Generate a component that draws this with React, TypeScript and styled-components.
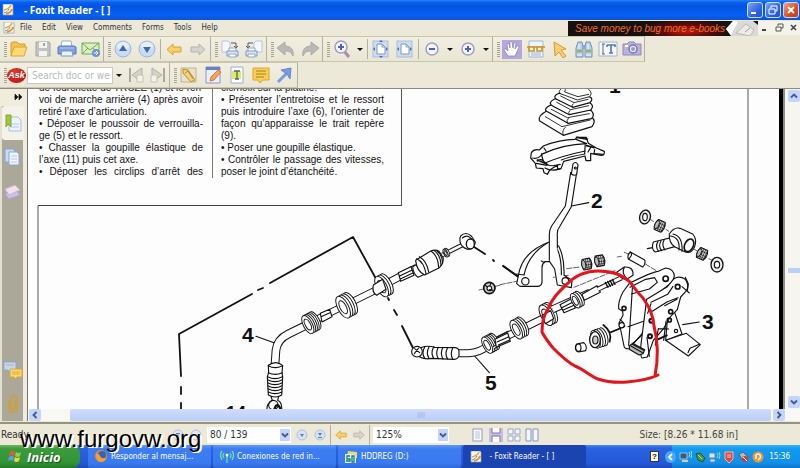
import React from "react";
import styled, { createGlobalStyle, css } from "styled-components";

const ui = '"DejaVu Sans Condensed", "DejaVu Sans", sans-serif';
const arial = '"Liberation Sans", Arial, sans-serif';

const Global = createGlobalStyle`
  *, *::before, *::after { box-sizing: border-box; }
  body { margin: 0; background: #ece9d8; font-family: ${ui}; font-size: 8px; color: #333; overflow: hidden; }
  button, input, select { font: inherit; color: inherit; margin: 0; padding: 0; border: 0; border-radius: 0; }
  button { background: none; }
  svg { display: block; }
`;

const Window = styled.div`
  position: relative;
  display: flex;
  flex-direction: column;
  height: 100vh;
`;

const TitleBar = styled.header`
  display: flex;
  align-items: center;
  height: 20px;
  flex: none;
  gap: 10px;
  padding: 0 1px 0 2px;
  background: linear-gradient(#2a86f8 0, #0a62ee 2px, #0453e2 6px, #0560f4 15px, #0b55dc 19px, #1c50b8 20px);
`;

const Title = styled.h1`
  flex: 1;
  margin: 0;
  font: bold 10px/18px "Open Sans", "Noto Sans", sans-serif;
  color: #fff;
  white-space: pre;
`;

const CaptionButtons = styled.div`
  display: flex;
  gap: 2px;
`;

const CaptionButton = styled.button<{ $close?: boolean }>`
  width: 16px;
  height: 16px;
  border: 1px solid #c9dcfb;
  border-radius: 3px;
  background: ${(p) => (p.$close ? "linear-gradient(135deg, #f0a088, #dd4a22 60%, #c43a16)" : "linear-gradient(135deg, #7ca5f5, #2f66e0 60%, #2252c4)")};
`;

const MenuBar = styled.nav`
  display: flex;
  align-items: center;
  height: 16px;
  flex: none;
  padding-left: 3px;
`;

const MenuItem = styled.button`
  height: 16px;
  margin-right: 10px;
  line-height: 14px;
`;

const MenuLogo = styled.span`
  width: 17px;
`;

const Banner = styled.a`
  display: flex;
  justify-content: space-between;
  height: 15px;
  width: 190px;
  margin-left: auto;
  padding-left: 7px;
  background: radial-gradient(ellipse 44px 12px at 118px 10px, #c81c0c, #5c0c08 55%, #16100e 100%) #16100e;
  font: italic 10px/15px ${arial};
  color: #ee6f2c;
  text-decoration: none;
  white-space: nowrap;
`;

const MdiButton = styled.button`
  width: 14px;
  height: 14px;
  background: #f4f3ea;
`;

const Toolbar = styled.div`
  display: flex;
  height: 26px;
  flex: none;
`;

const Group = styled.div`
  display: flex;
  align-items: center;
  height: 26px;
  padding-left: 4px;
  border-top: 1px solid #c9c5b2;
  border-right: 1px solid #b4b09e;
  border-bottom: 1px solid #c9c5b2;
  background: linear-gradient(#f1efe2, #e9e6d4);
`;

const Grip = styled.span`
  width: 3px;
  height: 15px;
  background: repeating-linear-gradient(#a8a594 0 1px, #ece9d8 1px 2px);
`;

const Tool = styled.button<{ $small?: boolean; $active?: boolean }>`
  display: flex;
  align-items: center;
  justify-content: center;
  width: ${(p) => (p.$small ? 22 : 24)}px;
  height: 20px;
  ${(p) => p.$active && css`
    background: linear-gradient(#b3a8dc, #b3a8dc) center / 20px 19px no-repeat;
  `}
`;

const Drop = styled.button`
  width: 12px;
  height: 20px;
  &::after {
    content: "";
    display: block;
    margin: 0 auto;
    width: 0;
    border: 3px solid transparent;
    border-top-color: #111;
    border-bottom: 0;
  }
`;

const Divider = styled.span`
  width: 1px;
  height: 20px;
  margin: 0 1px;
  background: #b4b09e;
`;

const AskLogo = styled.button`
  width: 19px;
  height: 15px;
  margin-right: 1px;
  border-radius: 50%;
  background: radial-gradient(circle at 40% 30%, #e23a2c, #b80c10);
  color: #fff;
  font: italic bold 9px/15px ${arial};
`;

const SearchBox = styled.input`
  width: 86px;
  height: 17px;
  padding-left: 4px;
  border: 1px solid #c4c9c8;
  background: #fff;
  font-size: 10px;
  &::placeholder { color: #b9b9b9; opacity: 1; }
`;

const Work = styled.main`
  display: flex;
  flex: 1;
  min-height: 0;
  border-top: 1px solid #8d8a7c;
`;

const Sidebar = styled.aside`
  display: flex;
  flex-direction: column;
  align-items: flex-start;
  width: 28px;
  flex: none;
  background: linear-gradient(90deg, #e4e1d0 0 2px, #aca899 2px 23px, #efecdf 23px 27px, #77756a 27px);
`;

const Expand = styled.button`
  width: 27px;
  height: 17px;
  padding-left: 12px;
  background: #f0eddc;
`;

const Tab = styled.button<{ $active?: boolean; $push?: boolean }>`
  display: flex;
  align-items: center;
  justify-content: center;
  width: 22px;
  height: 34px;
  margin-left: 2px;
  ${(p) => p.$active && css`background: #f5f3e9; border-radius: 3px 0 0 3px;`}
  ${(p) => p.$push && css`margin-top: auto;`}
`;

const Viewer = styled.section`
  display: flex;
  flex-direction: column;
  flex: 1;
  min-width: 0;
`;

const ViewRow = styled.div`
  display: flex;
  flex: 1;
  min-height: 0;
`;

const Page = styled.article`
  position: relative;
  flex: 1;
  overflow: hidden;
  padding-left: 10px;
  background: #fdfdfd;
  border-right: 4px solid #000;
`;

const TextBox = styled.div`
  display: flex;
  align-items: flex-end;
  width: 364px;
  height: 117px;
  padding-bottom: 27px;
  border-right: 1px solid #555;
  border-bottom: 1px solid #444;
  font: 10px/12px ${arial};
  color: #111;
`;

const Column = styled.div<{ $first?: boolean }>`
  padding: ${(p) => (p.$first ? "0 9px 0 1px" : "0 0 0 8px")};
  width: ${(p) => (p.$first ? 175 : 171)}px;
  ${(p) => p.$first && css`border-right: 1px solid #777;`}
`;

const Line = styled.div<{ $ragged?: boolean }>`
  height: 12px;
  white-space: nowrap;
  text-align-last: ${(p) => (p.$ragged ? "left" : "justify")};
`;

const Drawing = styled.svg`
  position: absolute;
  inset: 0;
  width: 100%;
  height: 100%;
`;

const VScroll = styled.div`
  display: flex;
  flex-direction: column;
  justify-content: space-between;
  align-items: center;
  width: 17px;
  flex: none;
  padding: 1px 1px 1px 3px;
  border-left: 2px solid #8c8c8c;
  background: #f6f5ef;
`;

const ScrollButton = styled.button`
  display: flex;
  align-items: center;
  justify-content: center;
  width: 12px;
  height: 12px;
  flex: none;
  border-radius: 2px;
  background: #c5d4fa;
`;

const VThumb = styled.span`
  width: 12px;
  height: 5px;
  margin-top: 42px;
  border-radius: 1px;
  background: #bccdf8;
`;

const HScroll = styled.div`
  display: flex;
  align-items: center;
  height: 12px;
  flex: none;
  padding: 0 15px 0 1px;
  gap: 2px;
  background: #f8f8f4;
`;

const HThumb = styled.span`
  display: flex;
  align-items: center;
  justify-content: center;
  flex: 1;
  height: 12px;
  margin-left: 27px;
  border-radius: 2px;
  background: linear-gradient(#d0dcfd, #bccdf8);
`;

const StatusBar = styled.footer`
  display: flex;
  align-items: center;
  height: 23px;
  flex: none;
  margin-top: 1px;
  padding-left: 1px;
  border-top: 2px solid #96937f;
  font-size: 10px;
  background: #ece9d8;
`;

const Ready = styled.span`
  width: 168px;
`;

const Nav = styled.button<{ $w?: number }>`
  display: flex;
  align-items: center;
  justify-content: center;
  width: ${(p) => p.$w ?? 18}px;
  height: 18px;
`;

const Combo = styled.label<{ $wide?: boolean }>`
  position: relative;
  width: ${(p) => (p.$wide ? 84 : 76)}px;
  height: 16px;
  margin: 0 2px;
  background: #fff;
`;

const Select = styled.select`
  width: 100%;
  height: 16px;
  padding-left: 3px;
  appearance: none;
  background: none;
`;

const ComboArrow = styled.span`
  position: absolute;
  right: 1px;
  top: 2px;
  display: flex;
  align-items: center;
  justify-content: center;
  width: 10px;
  height: 12px;
  background: #c5d4fa;
  pointer-events: none;
`;

const Layouts = styled.div`
  display: flex;
  margin-left: 18px;
`;

const SizeText = styled.span`
  margin-left: auto;
  margin-right: 62px;
  color: #444;
`;

const Taskbar = styled.div`
  display: flex;
  align-items: stretch;
  gap: 2px;
  height: 23px;
  flex: none;
  background: linear-gradient(#4a8af4 0, #2a62e0 3px, #2459d8 18px, #1c48b8);
`;

const Start = styled.button`
  display: flex;
  align-items: center;
  gap: 5px;
  width: 80px;
  margin-right: 6px;
  padding-left: 8px;
  border-radius: 0 8px 8px 0;
  background: linear-gradient(#6cb865 0, #3a9a3c 4px, #329636 17px, #237a28);
  font: italic bold 13px/20px "Open Sans", "Noto Sans", sans-serif;
  color: #fff;
  text-shadow: 1px 1px 1px #1b4d1b;
`;

const Task = styled.button<{ $active?: boolean }>`
  display: flex;
  align-items: center;
  gap: 3px;
  width: 123px;
  padding-left: 7px;
  border-radius: 2px;
  background: ${(p) => (p.$active ? "#1c44b0" : "linear-gradient(#5f9bfa 0, #3c7df2 4px, #397af0 18px, #2f68d8)")};
  color: #fff;
  white-space: pre;
`;

const Help = styled.span`
  width: 9px;
  height: 11px;
  margin: 6px 11px 0 auto;
  background: #fffbe0;
  border: 1px solid #333;
  color: #111;
  font: bold 8px/9px ${arial};
  text-align: center;
`;

const Tray = styled.div`
  display: flex;
  align-items: center;
  gap: 2px;
  width: 128px;
  padding-right: 10px;
  background: linear-gradient(#38b0f8 0, #129af0 4px, #1290ea 18px, #0c72c8);
  color: #fff;
`;

const TrayChevron = styled.button`
  display: flex;
  align-items: center;
  justify-content: center;
  width: 11px;
  height: 12px;
  flex: none;
  margin-left: -7px;
  border-radius: 50%;
  background: #48a8f8;
`;

const Clock = styled.time`
  margin-left: auto;
`;

const Watermark = styled.div`
  position: absolute;
  left: 20px;
  bottom: 15px;
  font: 24px/28px ${arial};
  color: #000;
  text-shadow: 1px 1px 0 #fff, 2px 1px 0 #fff;
  pointer-events: none;
`;

const Glyph = ({ w = 20, h = 18, children }: { w?: number; h?: number; children: React.ReactNode }) => (
  <svg width={w} height={h} viewBox={`0 0 ${w} ${h}`} fill="none" aria-hidden="true">{children}</svg>
);

const Foxit = ({ size = 12 }: { size?: number }) => (
  <svg width={size} height={size} viewBox="0 0 12 12" aria-hidden="true">
    <path d="M1 0h9l1 1v10H1z" fill="#fdf9ee" stroke="#7d9cc8" strokeWidth=".7" />
    <path d="M2 6C6 5 8 4 9 1" fill="none" stroke="#e9ab35" strokeWidth="1.6" />
    <path d="M4 10C8 9 9 8 10 5" fill="none" stroke="#f08a24" strokeWidth="2" />
    <path d="M2 9C5 8 6 7 7 5" fill="none" stroke="#5f8ac4" strokeWidth="1" />
  </svg>
);

const Chevron = ({ dir }: { dir: "up" | "down" | "left" | "right" }) => {
  const d = { up: "M1 5.5l3-3 3 3", down: "M1 2.5l3 3 3-3", left: "M5.5 1l-3 3 3 3", right: "M2.5 1l3 3-3 3" }[dir];
  return <svg width="8" height="8" viewBox="0 0 8 8"><path d={d} fill="none" stroke="#43598c" strokeWidth="1.8" /></svg>;
};

const BackArrow = ({ gray, flip, small }: { gray?: boolean; flip?: boolean; small?: boolean }) => (
  <svg width={small ? 12 : 16} height={small ? 10 : 13} viewBox="0 0 16 13">
    <path transform={flip ? "translate(16 0) scale(-1 1)" : undefined} d="M1 6.5L7 1v3h8v5H7v3z" fill={gray ? "#d5d4cd" : "#f8cf68"} stroke={gray ? "#b4b3ac" : "#dca034"} strokeWidth="1" />
  </svg>
);

const Disc = ({ mark }: { mark: "up" | "down" }) => (
  <Glyph>
    <circle cx="10" cy="9" r="8" fill="#c9dcf6" stroke="#9db6de" />
    <ellipse cx="10" cy="6" rx="6" ry="4" fill="#e4effc" />
    <path d={mark === "up" ? "M6 11l4-6 4 6z" : "M6 7l4 6 4-6z"} fill="#4267b0" />
  </Glyph>
);

const PrintPages = ({ flip }: { flip?: boolean }) => (
  <Glyph>
    <g transform={flip ? "translate(20 0) scale(-1 1)" : undefined}>
      <path d="M2 1h6l2 2v9H2z" fill="#f4f8fe" stroke="#b7c4da" />
      <path d="M11 3h5v5M14 6l2 2 2-2" stroke="#555" />
      <path d="M9 8h7v4H9z" fill="#fff" stroke="#8ea3ca" />
      <path d="M7 11h11v5H7z" fill="#dbe6f8" stroke="#7d95c3" />
      <path d="M9 14h7v3H9z" fill="#fff" stroke="#8ea3ca" />
    </g>
  </Glyph>
);

const Undo = ({ flip }: { flip?: boolean }) => (
  <Glyph>
    <path transform={flip ? "translate(20 0) scale(-1 1)" : undefined} d="M1 8l8-6v4c6 0 9 4 8 10-2-4-4-5-8-5v4z" fill="#b9b9b6" stroke="#a9a9a6" />
  </Glyph>
);

const Fit = ({ wide }: { wide?: boolean }) => (
  <Glyph>
    <rect x="2" y="1" width="15" height="16" fill="#cfdcf0" stroke="#a9bddc" />
    <path d="M6 4h5l3 3v7H6z" fill="#fff" stroke="#7e97c4" />
    <path d="M11 4v3h3" stroke="#7e97c4" />
    <path d={wide ? "M2 9l2-2v4zM17 9l-2-2v4z" : "M2 9l2-2v4zM17 9l-2-2v4zM10 0L8 2h4zM10 18l-2-2h4z"} fill="#466eb4" />
  </Glyph>
);

const Lens = ({ plus, handle }: { plus?: boolean; handle?: boolean }) => (
  <Glyph>
    {handle && <path d="M12 11l5 6" stroke="#a48cb6" strokeWidth="3" />}
    <circle cx={handle ? 9 : 10} cy={handle ? 7 : 9} r="6" fill="#f4f6fe" stroke="#a59bc4" strokeWidth="1.5" />
    <path transform={handle ? "translate(-1 -2)" : undefined} d={plus ? "M7 9h6M10 6v6" : "M7 9h6"} stroke="#4a62b8" strokeWidth="2" />
  </Glyph>
);

const FindPage = ({ flip }: { flip?: boolean }) => (
  <Glyph w={16} h={16}>
    <g transform={flip ? "translate(16 0) scale(-1 1)" : undefined}>
      <path d="M2 1v13M14 1L4 8l10 7z" fill="#d6d4ca" stroke="#b1afa5" />
      <path d="M9 8h6v7H9z" fill="#f3f2ec" stroke="#c5c3b9" />
      <path d="M2 1v14" stroke="#aaa89e" strokeWidth="2" />
    </g>
  </Glyph>
);

const MiniDisc = ({ d, pale }: { d: string; pale?: boolean }) => (
  <Glyph w={12} h={12}>
    <circle cx="6" cy="6" r="5" fill={pale ? "#e2e8f0" : "#d6e2f6"} stroke="#aebfdd" />
    <path d={d} fill="#6079ad" />
  </Glyph>
);

const PageMode = ({ kind }: { kind: number }) => (
  <Glyph w={14} h={14}>
    {kind === 0 && <><rect x="2" y="1" width="9" height="12" fill="#f8fafe" stroke="#8e9cc4" /><path d="M4 4h5M4 6h5M4 8h5M4 10h5" stroke="#b8c2dc" /></>}
    {kind === 1 && <><rect x="0" y="0" width="14" height="14" fill="#c8bce2" /><path d="M3 0v5h8V0M3 14V8h8v6" fill="#fff" stroke="#7f76ac" /></>}
    {kind === 2 && <path d="M1 1h5v5H1zM8 1h5v5H8zM1 8h5v5H1zM8 8h5v5H8z" fill="#f3f6fd" stroke="#9aa8cc" />}
    {kind === 3 && <path d="M1 1h5v12H1zM8 1h5v12H8z" fill="#f3f6fd" stroke="#8494c0" />}
  </Glyph>
);

/* A pipe drawn as a dark stroke with a white core. */
const Tube = ({ d, w }: { d: string; w: number }) => (
  <>
    <path d={d} strokeWidth={w} strokeLinecap="butt" />
    <path d={d} strokeWidth={w - 6} stroke="#fff" strokeLinecap="butt" />
  </>
);

/* A grommet: stacked discs seen along the shaft direction. */
const Rings = ({ x, y, r, n = 3, step = 7, a = -28 }: { x: number; y: number; r: number; n?: number; step?: number; a?: number }) => (
  <g transform={`translate(${x} ${y}) rotate(${a})`} fill="#fff" strokeWidth="2.8">
    {Array.from({ length: n }, (_, i) => (
      <ellipse key={i} cx={(n - 1 - i) * step - ((n - 1) * step) / 2} cy={0} rx={r * 0.45} ry={r} />
    ))}
    <ellipse cx={(-(n - 1) * step) / 2} cy={0} rx={r * 0.26} ry={r * 0.6} />
  </g>
);

const Roller = ({ x, y, a = 25 }: { x: number; y: number; a?: number }) => (
  <g transform={`translate(${x} ${y}) rotate(${a})`}>
    <path d="M-12-16H10Q18 0 10 16H-12Q-20 0-12-16z" fill="#ddd" />
    <path d="M-8-14v28M-2-15v30M4-15v30M10-13v26M-14-7h28M-15 3h30M-13 10h25" strokeWidth="1.8" />
    <ellipse cx="-10" cy="0" rx="6" ry="13" fill="#bbb" strokeWidth="2.5" />
  </g>
);

const Diagram = () => (
  <Drawing viewBox="28 88 751 321" preserveAspectRatio="xMinYMin slice" fill="none" stroke="#111" strokeLinecap="round" strokeLinejoin="round">
    <path d="M38 205V409M748 88V409" stroke="#555" />
    <path d="M181 375l-2-42 73-40M258 289l5-2M270 282l83-46 22 40M388 297l1 2M394 309l3 5M402 325l13 26M181 386v7M181 402v6" strokeWidth="1.8" />
    <path d="M471 244l14 9M493 259l1 1M503 265l17 12" strokeWidth="1.8" />

    <g transform="translate(220 215) scale(.333333)" strokeWidth="3.4">
      <Tube d="M165 445L168 402Q172 370 205 354L262 326" w={26} />
      <Tube d="M280 315L480 216" w={22} />
      <path d="M301 292l28-12 7 22-30 16zM303 302l27-12" fill="#fff" />
      <Rings x={274} y={320} r={30} n={5} step={6} />
      <Rings x={380} y={268} r={36} n={4} step={8} />
      <Tube d="M490 208L590 155" w={24} />
      <path d="M535 170l38-18 9 26-40 18zM539 180l36-17M541 189l36-17" fill="#fff" />
      <Rings x={492} y={208} r={34} n={3} step={8} />
      <path d="M460 207l28-17 10 30-28 18q-15-8-10-31z" fill="#fff" />
      <path d="M578 152l28-16 18 34-30 14q-15-12-16-32z" fill="#fff" />
      <path d="M587 133l45-28q14-6 25 1l13 20q0 18-12 29l-44 22q-24-12-27-44z" fill="#fff" />
      <path d="M590 128q22 10 28 45M598 122q22 12 28 46M634 106q20 14 22 48M643 104q19 14 20 44M651 105q16 12 17 36" />
      <Tube d="M667 117L735 83" w={14} />
      <Rings x={679} y={110} r={13} n={2} step={5} />
      <path d="M722 60q15-15 32 0l12 18q-2 22-24 22-20-8-22-24-2-10 2-16z" fill="#fff" />
      <ellipse cx="751" cy="84" rx="12" ry="15" fill="#fff" strokeWidth="4" />
      <path d="M727 66q14-12 27 2" />
      <path d="M145 448q22-16 43 0l-2 22 2 12-3 55q-18 12-40 0l-3-55 4-12z" fill="#fff" />
      <path d="M145 449q20 12 42 0M145 470q20 10 42 0M143 482q22 12 44 0M143 491q22 12 44 0M143 500q22 12 44 0M143 509q22 12 43 0M144 518q22 12 42 0M145 528q20 10 41 0" />
      <path d="M153 541l4 12q-22 14-14 35M176 541l-3 12q14 6 12 30" />
      <circle cx="160" cy="567" r="14" /><path d="M163 580q8-24 18-2" strokeWidth="7" />
      <path d="M108 361l54 19M764 420l44 50" />
      <Tube d="M700 412H745Q780 410 810 385L870 354" w={24} />
      <path d="M602 395q20-8 43-1l62 1q11 3 10 14v10q-4 12-16 11l-64-3q-20 4-37-3z" fill="#fff" />
      <path d="M614 393q-10 18 0 34M627 393q-10 18 0 34M641 393q-10 18 0 34M655 394q-10 18 0 34M669 394q-10 18 0 35M683 395q-10 18 0 34M698 396q-8 18 0 33" />
      <circle cx="591" cy="407" r="16" fill="#fff" /><path d="M584 398l15 12M583 413l13-17" />
      <Rings x={812} y={382} r={27} n={5} step={6} />
      <path d="M777 222l62-14" strokeWidth="2" />
      <circle cx="808" cy="216" r="17" strokeWidth="5" fill="#ccc" /><circle cx="808" cy="217" r="7" fill="#fff" />
      <path d="M794 207l9 6M813 200l-3 9M818 223l-9-2" />
    </g>

    <g transform="translate(500 225) scale(.333333)" strokeWidth="3.4">
      <Tube d="M-20 366L0 352" w={10} />
      <Tube d="M-5 343L140 272" w={24} />
      <path d="M-15 340l38-19 8 25-42 18zM-9 348l34-15M-5 357l34-15" fill="#fff" />
      <Rings x={58} y={306} r={31} n={4} step={7} />
      <Rings x={145} y={264} r={34} n={3} step={8} />
      <path d="M126 268l26-14 9 24-25 15z" fill="#fff" />
      <Tube d="M158 250L270 200" w={24} />
      <path d="M180 236l34-18 12 28-34 14zM184 246l34-17M188 253l34-15" fill="#fff" />
      <Rings x={232} y={221} r={24} n={3} step={7} />
      <path d="M246 205l45-26 10 20-48 24z" fill="#fff" />
      <Tube d="M293 190L365 155" w={15} />
      <path d="M316 169l8 15M323 166l8 15M330 163l8 15M337 160l8 15" strokeWidth="4" />
      <path d="M350 139l23-16q28-2 26 25l-21 13q-17-4-28-22z" fill="#fff" />
      <path d="M373 124q-10 16 8 35" />

      <path d="M10 120l45 32" strokeWidth="5" />
      <path d="M0 176l50-10M205 148l-45 6M222 184L345 134M200 128l40-5M352 93l12-2M373 79l30 13M436 114l33 20" strokeWidth="2" strokeDasharray="16 5" />
      <Roller x={261} y={114} a={-10} /><Roller x={300} y={104} a={-10} />
      <path d="M391 78l43 24q4 13-6 21l-43-24q-4-12 6-21z" fill="#fff" /><path d="M391 78q9 8-5 21" />
      <path d="M55 150q10-72 93-102l28 12q18 35 16 88l24 15-2 22-42-8-8-48-15-22-15 0q-8 6-8 18v44q-2 12-14 12H60l-10-8z" fill="#fff" />
      <path d="M142 51Q85 85 72 147M172 70q13 28 12 76M73 147l-23-3M134 110l-10-5" />
      <circle cx="76" cy="166" r="11" /><circle cx="196" cy="165" r="10" />
      <path d="M212-160L196-60 155 0q-8 12-7 30v73L172 122V30q-2-18 8-30L214-58 230-160z" fill="#fff" stroke="none" />
      <path d="M212-160L196-60 155 0q-8 12-7 30v73M230-160L214-58 180 0q-10 12-8 30v36" />
      <path d="M214-156l5-30q8-10 15 2l-4 29q-7 6-16-1z" fill="#fff" /><circle cx="226" cy="-174" r="3" />
      <path d="M214-60l52-10M548 296l50-8" />

      <path d="M460 48l66-16 12 26-72 20q-14-8-6-30z" fill="#fff" />
      <path d="M474 47q-10 14 2 29M483 45q-9 15 2 29M492 43q-8 15 3 29M442 68l16-3" />
      <g transform="translate(0 24)">
        <path d="M508 0q14-22 32-17l38 17q14 16 6 38-8 22-28 16l-32-16q-18-12-16-38z" fill="#fff" />
        <path d="M511 6q30 4 26 42M519 0q30 6 27 52" /><ellipse cx="567" cy="34" rx="13" ry="20" transform="rotate(25 567 34)" fill="#fff" strokeWidth="5" />
      </g>
      <Roller x={607} y={84} /><Roller x={480} y={0} />
      <ellipse cx="651" cy="116" rx="18" ry="22" fill="#eee" strokeWidth="4" /><ellipse cx="651" cy="116" rx="8" ry="10" fill="#fff" />
      <ellipse cx="435" cy="-27" rx="16" ry="21" transform="rotate(15 435 -27)" fill="#eee" strokeWidth="4" /><ellipse cx="435" cy="-27" rx="7" ry="11" fill="#fff" />
      <path d="M450-20l10 6M498 10l8 6M582 70l8 4M627 98l12 7" strokeWidth="2" />

      <path d="M388 172Q455 138 475 136l22-10q24 2 26 24l-5 18-55 42-22 23-6 54v25l-47 56q-15 2-16-8l-11-54-4-15 12-23-1-12-12-8q-2-22 13-50z" fill="#fff" />
      <path d="M398 173l-12 185M390 184l47-24 27-5 8 14-24 20-54 15M384 302l55-19M434 320l-44 40M360 280l10 10" />
      <path d="M497 343l62-21 42 34-36 34z" fill="#fff" />
      <path d="M506 250l14-2 26 76-49 19 5-60z" fill="#fff" />
      <path d="M440 220l62-38 20-24q16-10 34 2 12 16 4 33l-18 20-10 38-20 20-22 38-30 34-18 50-16 3q-8-10 0-65z" fill="#fff" />
      <path d="M453 229l50-24 16-24M452 259l50-32 32-12M453 233l-10 29M494 239l37-19M441 334l7 57M475 308l-9 50M475 308l31 1M564 380l6-13 28-12M498 285l-7 58M556 154l9 20-3 20M546 182l22 19" />
      <path d="M388 360l10-8 36 19-5 12-12 4-29-17z" fill="#bbb" /><path d="M393 360l35 20M397 355l34 18" />
      <circle cx="497" cy="158" r="8" strokeWidth="5" /><circle cx="533" cy="182" r="7" strokeWidth="5" />
      <circle cx="372" cy="247" r="6" strokeWidth="5" /><circle cx="365" cy="298" r="8" fill="#fff" />
      <circle cx="454" cy="284" r="6" strokeWidth="6" /><circle cx="450" cy="331" r="6" strokeWidth="6" />
      <circle cx="512" cy="257" r="6" strokeWidth="5" /><circle cx="508" cy="282" r="6" strokeWidth="5" /><circle cx="528" cy="315" r="5" />
      <path d="M474 340l26-12" strokeWidth="6" />
      <path d="M310 297q28 21 19 50M328 320l30-12" strokeWidth="5" />
      <path d="M330 320l45-19" strokeWidth="3" />
      <Rings x={298} y={336} r={28} n={4} step={8} a={-18} />
      <ellipse cx="285" cy="341" rx="16" ry="24" fill="#fff" strokeWidth="4" /><ellipse cx="286" cy="342" rx="8" ry="12" fill="#ccc" />
      <path d="M230 354l21-4q12 10 6 24l-22 4q-15-10-5-24z" fill="#fff" /><ellipse cx="235" cy="365" rx="8" ry="11" />
    </g>

    <g transform="translate(500 85) scale(.333333)" strokeWidth="3.6" fill="#fff">
      <path d="M142 74q-29 14-24 30l72 44 86-26q12-15 2-26z" />
      <path d="M155 56q-30 14-11 22l60 34 70-14q12-10 0-24z" />
      <path d="M165 38q-24 12-7 22l50 26 64-14q12-12-2-22z" />
      <path d="M176 22q-20 10-6 18l48 24 52-14q12-12-2-18z" />
      <path d="M182 6q-10 12 2 18l48 18 36-10q12-10-2-26z" stroke="none" />
      <path d="M182 10q-10 8 2 14l48 18 36-10q12-10-2-22M196 11l-2 7 40 14 32-7M196 124q-12 10-6 24M205 97q-8 7-2 15M210 73q-8 6-2 13M220 53q-8 4-2 11M136 92l50 30 84-20M154 70l48 25 66-12M170 49l42 22 54-12M182 30l40 20 42-10" fill="none" strokeWidth="2.6" />
      <path d="M130 180q50-20 95-20l6-6h28l6 18 24 14 24 10q2 12-10 12l-31-6v22h-14l-3-14-64 16-8 22-10 2-1-12-22 13-8 14-10-5-3-12-20-2-3-14-14-16 2-16q8-12 24-8z" />
      <path d="M124 205q64-30 136-32M132 186l6 9M125 203q2 22 10 28 52-22 121-36M256 172l-2 30M228 160l30 12M274 181l-10 17M284 191l-2 12 28 2M137 231q8 14 44 4M109 232l32 6M112 225q10-12 26 8M98 216q14 4 25-7M184 222q24-10 71-18M135 246q20 12 46 2" fill="none" />
      <path d="M260 179l23 6M112 222l28 12M230 154l33 6" strokeWidth="5" strokeDasharray="5 4" />
    </g>

    <g fill="#111" stroke="none" fontFamily="Liberation Sans, Arial, sans-serif" fontWeight="bold" fontSize="21">
      <text x="591" y="207">2</text><text x="702" y="328">3</text><text x="242" y="341">4</text><text x="485" y="389">5</text>
      <text x="609" y="92">1</text><text x="226" y="418" fontSize="18">14</text>
    </g>
    <path d="M658 374C650 378 640 380 627 381 615 382 607 381 598 378 590 375 583 368 575 365 567 361 560 354 553 347 549 342 545 337 542 331 542 322 543 315 548 308 552 297 559 291 567 283 576 274 585 270 598 270 610 270 622 273 630 281 635 288 639 293 643 297 649 306 653 313 654 325 658 340 659 354 655 375" stroke="#e3141c" strokeWidth="3" />
  </Drawing>
);

const left: [string, boolean?][] = [
  ["de fourchette de TRCZE (1) et le ren-"], ["voi de marche arrière (4) après avoir"], ["retiré l’axe d’articulation.", true],
  ["• Déposer le poussoir de verrouilla-"], ["ge (5) et le ressort.", true], ["• Chasser la goupille élastique de"],
  ["l’axe (11) puis cet axe.", true], ["• Déposer les circlips d’arrêt des"],
];
const right: [string, boolean?][] = [
  ["cle/noix sur la platine.", true], ["• Présenter l’entretoise et le ressort"], ["puis introduire l’axe (6), l’orienter de"],
  ["façon qu’apparaisse le trait repère"], ["(9).", true], ["• Poser une goupille élastique.", true],
  ["• Contrôler le passage des vitesses,"], ["poser le joint d’étanchéité.", true],
];

export default function App() {
  return (
    <Window>
      <Global />
      <TitleBar>
        <Foxit />
        <Title>- Foxit Reader - [ ]</Title>
        <CaptionButtons>
          <CaptionButton aria-label="Minimize"><Glyph w={14} h={14}><path d="M3 10h5" stroke="#fff" strokeWidth="2" /></Glyph></CaptionButton>
          <CaptionButton aria-label="Restore"><Glyph w={14} h={14}><path d="M5 5V3h6v5H9M3 6h6v5H3z" stroke="#fff" /></Glyph></CaptionButton>
          <CaptionButton $close aria-label="Close"><Glyph w={14} h={14}><path d="M4 4l6 6M10 4l-6 6" stroke="#fff" strokeWidth="2" /></Glyph></CaptionButton>
        </CaptionButtons>
      </TitleBar>

      <MenuBar>
        <MenuLogo><Foxit /></MenuLogo>
        {["File", "Edit", "View", "Comments", "Forms", "Tools", "Help"].map((m) => <MenuItem key={m}>{m}</MenuItem>)}
        <Banner href="#">
          Save money to bug more e-books
          <Glyph w={32} h={15}><path d="M0 8L7 0h20l5 4v11H5z" fill="#d9d9d6" /><path d="M0 8L7 0l5 1-7 13z" fill="#fff" /><path d="M10 12L20 3l8 6-4 6z" fill="#ecebe8" stroke="#b9b9b5" /><path d="M19 11l5-4" stroke="#999" /></Glyph>
        </Banner>
        <MdiButton aria-label="Minimize document"><Glyph w={14} h={14}><path d="M4 9h4" stroke="#444" strokeWidth="2" /></Glyph></MdiButton>
        <MdiButton aria-label="Restore document"><Glyph w={14} h={14}><path d="M6 5V3h5v4H9M4 6h5v4H4z" stroke="#555" /></Glyph></MdiButton>
        <MdiButton aria-label="Close document"><Glyph w={14} h={14}><path d="M5 4l5 5M10 4L5 9" stroke="#444" strokeWidth="1.6" /></Glyph></MdiButton>
      </MenuBar>

      <Toolbar>
        <Group>
          <Grip />
          <Tool aria-label="Open"><Glyph><path d="M2 16V3l2-1h4l2 2h6v3" fill="#f3c44f" stroke="#d79a26" /><path d="M2 16l3-9h13l-3 9z" fill="#fbd977" stroke="#dba338" /></Glyph></Tool>
          <Tool aria-label="Save"><Glyph><path d="M3 2h13l1 1v13H3z" fill="#c3c3c1" stroke="#a6a6a4" /><path d="M6 2h8v6H6zM6 11h8v5H6z" fill="#f3f3f1" /><path d="M11 3v3" stroke="#a6a6a4" strokeWidth="2" /></Glyph></Tool>
          <Tool aria-label="Print"><Glyph><path d="M5 1h9l1 6H4z" fill="#fff" stroke="#94abd7" /><path d="M1 7l2-1h14l2 1v7H1z" fill="#7fa0dd" stroke="#5878bb" /><path d="M5 11h10l1 5H4z" fill="#eef4ff" stroke="#7d97cd" /><path d="M3 8h14" stroke="#b4cbf4" /></Glyph></Tool>
          <Tool aria-label="E-mail"><Glyph><path d="M1 3h17v11H1z" fill="#d9efc0" stroke="#73a850" /><path d="M1 3l8 7 9-7M1 14l6-6M18 14l-6-6" stroke="#73a850" /><circle cx="15" cy="13" r="4" fill="#6e93d8" /><path d="M13 13h4M15 11l2 2-2 2" stroke="#fff" /></Glyph></Tool>
        </Group>
        <Group>
          <Grip />
          <Tool aria-label="Previous page"><Disc mark="up" /></Tool>
          <Tool aria-label="Next page"><Disc mark="down" /></Tool>
          <Divider />
          <Tool aria-label="Back"><BackArrow /></Tool>
          <Tool aria-label="Forward"><BackArrow gray flip /></Tool>
        </Group>
        <Group>
          <Grip />
          <Tool aria-label="Rotate right"><PrintPages /></Tool>
          <Tool aria-label="Rotate left"><PrintPages flip /></Tool>
        </Group>
        <Group>
          <Grip />
          <Tool aria-label="Undo"><Undo /></Tool>
          <Tool aria-label="Redo"><Undo flip /></Tool>
        </Group>
        <Group>
          <Grip />
          <Tool aria-label="Zoom"><Lens plus handle /></Tool>
          <Drop aria-label="Zoom options" />
          <Divider />
          <Tool aria-label="Fit page"><Fit /></Tool>
          <Tool aria-label="Fit width"><Fit wide /></Tool>
          <Divider />
          <Tool aria-label="Zoom out"><Lens /></Tool>
          <Drop aria-label="Zoom out options" />
          <Tool aria-label="Zoom in"><Lens plus /></Tool>
          <Drop aria-label="Zoom in options" />
        </Group>
        <Group>
          <Grip />
          <Tool $active aria-label="Hand tool"><Glyph><path d="M6 16L2 10q0-2 2-1l2 2L5 4q1-2 2 0l1 4V2q1-2 2 0l1 6 1-5q2-2 2 0l-1 6 2-3q2-1 2 1l-3 7-1 2z" fill="#fff" stroke="#8579b8" strokeWidth=".7" /></Glyph></Tool>
          <Tool aria-label="Reading mode"><Glyph><path d="M3 1h14v16H3z" fill="#eef4fc" stroke="#a3b5d6" /><path d="M5 13h10M5 15h10" stroke="#9fb3d8" /><path d="M1 7h18" stroke="#c79532" strokeWidth="1.6" /><path d="M3 7h5v4H3zM11 7h5v4h-5z" fill="#fff6c8" stroke="#c79532" strokeWidth="1.6" /></Glyph></Tool>
          <Tool aria-label="Select annotation"><Glyph><path d="M4 2l12 7-5 1 5 6-3 2-4-6-4 4z" fill="#f5cf72" stroke="#d49a3a" /></Glyph></Tool>
          <Tool aria-label="Find"><Glyph><path d="M4 2h4l1 5v10H2V8zM12 2h4l2 6v9h-7V7z" fill="#bdd0ec" stroke="#7790b8" /><path d="M3 11h5M12 11h5" stroke="#8fb673" strokeWidth="3" /><path d="M8 5h4v4H8z" fill="#8ea5cc" /><path d="M5 4v5M14 4v5M3 15h5M12 15h5" stroke="#f3f8ff" /></Glyph></Tool>
          <Tool aria-label="Select text"><Glyph><path d="M1 2h18v14H1z" fill="#f5f8fe" stroke="#a4b3d8" /><path d="M5 4v10M4 4h3M4 14h3" stroke="#667" /><path d="M9 5h8v2M13 5v8M11 13h4M9 7V5" stroke="#5874bc" strokeWidth="1.6" /></Glyph></Tool>
          <Tool aria-label="Snapshot"><Glyph><path d="M1 4h4l2-2h5l2 2h5v11H1z" fill="#b9b3dc" stroke="#8f88bd" /><circle cx="11" cy="9" r="4" fill="#e6e7f8" stroke="#7a74ac" strokeWidth="1.5" /><circle cx="11" cy="9" r="2" fill="#8f9bd2" /><path d="M3 6h3" stroke="#fff" strokeWidth="2" /></Glyph></Tool>
        </Group>
      </Toolbar>

      <Toolbar>
        <Group>
          <Grip />
          <AskLogo>Ask</AskLogo>
          <SearchBox aria-label="Search" placeholder="Search doc or we" />
          <Drop aria-label="Search options" />
          <Tool $small aria-label="Find previous"><FindPage /></Tool>
          <Tool $small aria-label="Find next"><FindPage flip /></Tool>
        </Group>
        <Group>
          <Grip />
          <Tool aria-label="Attach file"><Glyph><path d="M2 2h15v14H2z" fill="#e8e1cd" stroke="#c1b48c" /><path d="M4 3l5 1 7 10-4 2-8-9zM6 7l3-2 5 8" fill="#f1d37d" stroke="#b98c2e" /></Glyph></Tool>
          <Tool aria-label="Pencil"><Glyph><path d="M3 1h14v16H3z" fill="#e8effc" stroke="#8797cc" /><path d="M3 1h14v3H3z" fill="#6c7fc2" /><path d="M7 15l1-4 7-7 3 2-7 8z" fill="#f3a659" stroke="#cf7a33" /></Glyph></Tool>
          <Tool aria-label="Typewriter"><Glyph><path d="M4 1h12v16H4z" fill="#fff" stroke="#98acd8" /><path d="M5 5h9v8H5z" fill="#e2ea58" /><path d="M7 5h6M10 5v8M8 13h4" stroke="#4a6a70" strokeWidth="1.3" /></Glyph></Tool>
          <Tool aria-label="Note"><Glyph><path d="M2 2h16v12h-6l-3 3-2-3H2z" fill="#f9cf50" stroke="#dca332" /><path d="M5 5h10M5 8h10M5 11h8" stroke="#a8802a" /></Glyph></Tool>
          <Tool aria-label="Arrow"><Glyph><path d="M3 16L14 5" stroke="#7e9ade" strokeWidth="3" /><path d="M6 4l10-2-1 11-3-5z" fill="#7e9ade" stroke="#6584cf" /></Glyph></Tool>
        </Group>
      </Toolbar>

      <Work>
        <Sidebar>
          <Expand aria-label="Expand panel"><Glyph w={12} h={9}><path d="M3 1v6l3-3zM7 1v6l3-3zM3 4H2M7 4H6" fill="#111" stroke="#111" strokeWidth=".6" /></Glyph></Expand>
          <Tab $active aria-label="Bookmarks"><Glyph><path d="M6 3h9l3 3v11H6z" fill="#eef4fe" stroke="#a9bde0" /><path d="M8 10h8M8 13h8" stroke="#b5c7e6" /><path d="M3 1h5v12l-3-3-2 3z" fill="#a4c63c" stroke="#83a52c" /></Glyph></Tab>
          <Tab aria-label="Pages"><Glyph><path d="M2 1h8l2 2v11H2z" fill="#c8daf5" stroke="#8aa5d2" /><path d="M6 4h8l2 2v11H6z" fill="#f0f6ff" stroke="#8aa5d2" /><path d="M8 8h6M8 11h6M8 14h6" stroke="#b4c8e8" /></Glyph></Tab>
          <Tab aria-label="Layers"><Glyph><path d="M2 12l11-4 4 5-11 4z" fill="#c8c4ea" stroke="#a9a3d2" /><path d="M2 7l10-4 5 5-11 5z" fill="#f3dfe8" stroke="#c9b4cc" /></Glyph></Tab>
          <Tab $push aria-label="Comments"><Glyph><path d="M1 1h12v8H8l-2 2-1-2H1z" fill="#c3d7f8" stroke="#8ba6d8" /><path d="M7 8h12v8h-5l-2 2-1-2H7z" fill="#fbd96c" stroke="#d9a63a" /><path d="M3 4h8M9 11h8M9 13h8" stroke="#c99b3a" strokeWidth=".7" /></Glyph></Tab>
          <Tab aria-label="Attachments"><Glyph><path d="M6 5v9q0 3 4 3t4-3V4q0-3-3-3T8 4v8q0 2 2 2t2-2V6" stroke="#d0a02c" strokeWidth="1.5" /></Glyph></Tab>
        </Sidebar>
        <Viewer>
          <ViewRow>
            <Page>
              <TextBox>
                <Column $first>{left.map(([t, r]) => <Line key={t} $ragged={r}>{t}</Line>)}</Column>
                <Column>{right.map(([t, r]) => <Line key={t} $ragged={r}>{t}</Line>)}</Column>
              </TextBox>
              <Diagram />
            </Page>
            <VScroll>
              <ScrollButton aria-label="Scroll up"><Chevron dir="up" /></ScrollButton>
              <VThumb />
              <ScrollButton aria-label="Scroll down"><Chevron dir="down" /></ScrollButton>
            </VScroll>
          </ViewRow>
          <HScroll>
            <ScrollButton aria-label="Scroll left"><Chevron dir="left" /></ScrollButton>
            <HThumb><Glyph w={8} h={6}><path d="M1 0v6M3 0v6M5 0v6M7 0v6" stroke="#98b0e8" strokeWidth=".8" /></Glyph></HThumb>
            <ScrollButton aria-label="Scroll right"><Chevron dir="right" /></ScrollButton>
          </HScroll>
        </Viewer>
      </Work>

      <StatusBar>
        <Ready>Ready</Ready>
        <Nav aria-label="First page"><MiniDisc pale d="M4 4h4v1H4zM4 8l2-3 2 3z" /></Nav>
        <Nav aria-label="Previous page"><MiniDisc pale d="M4 8l2-3 2 3z" /></Nav>
        <Combo $wide><Select aria-label="Page"><option>80 / 139</option></Select><ComboArrow><Chevron dir="down" /></ComboArrow></Combo>
        <Nav aria-label="Next page"><MiniDisc d="M4 5l2 3 2-3z" /></Nav>
        <Nav aria-label="Last page"><MiniDisc d="M4 4l2 3 2-3zM4 8h4v1H4z" /></Nav>
        <Divider />
        <Nav aria-label="Previous view"><BackArrow small /></Nav>
        <Nav aria-label="Next view"><BackArrow small gray flip /></Nav>
        <Divider />
        <Combo><Select aria-label="Zoom level"><option>125%</option></Select><ComboArrow><Chevron dir="down" /></ComboArrow></Combo>
        <Layouts>
          {["Single page", "Continuous", "Facing", "Continuous facing"].map((n, i) => <Nav key={n} aria-label={n}><PageMode kind={i} /></Nav>)}
        </Layouts>
        <SizeText>Size: [8.26 * 11.68 in]</SizeText>
      </StatusBar>

      <Taskbar>
        <Start>
          <Glyph w={14} h={13}><path d="M2 2q3-2 5 0L6 6Q4 4 1 6z" fill="#f2562e" /><path d="M8 2q3 2 5 0l-1 4q-3 2-5 0z" fill="#8ed04a" /><path d="M1 7q3-2 5 0l-1 4q-2-2-5 0z" fill="#5c9df8" /><path d="M7 7q2 2 5 0l-1 4q-3 2-5 0z" fill="#fbd03c" /></Glyph>
          Inicio
        </Start>
        <Task><Glyph w={13} h={13}><circle cx="6" cy="6" r="6" fill="#f08a24" /><circle cx="7" cy="5" r="4" fill="#3a62b4" /><path d="M1 4q3-1 4 2t6 2q-1 4-5 4-5-1-5-8z" fill="#f4a030" /></Glyph>Responder al mensaj...</Task>
        <Task><Glyph w={14} h={13}><path d="M7 6v7M4 3q-2 3 0 5M10 3q2 3 0 5M2 1q-3 4 0 9M12 1q3 4 0 9" stroke="#72e096" strokeWidth="1.3" /><circle cx="7" cy="5" r="1.5" fill="#fff" /></Glyph>Conexiones de red in...</Task>
        <Task><Glyph w={13} h={13}><path d="M3 1l9 1v6H2z" fill="#f4d472" /><path d="M0 4h9l2 2v7H0z" fill="#dff0ee" /><path d="M5 6H2v3h3v2H1M7 6v6h2V6z" stroke="#1a8178" strokeWidth="1.3" /></Glyph>HDDREG (D:)</Task>
        <Task $active><Foxit />  - Foxit Reader - [ ]</Task>
        <Help>?</Help>
        <Tray>
          <TrayChevron aria-label="Show hidden icons"><Glyph w={8} h={8}><path d="M5 1L2 4l3 3" stroke="#fff" strokeWidth="1.8" /></Glyph></TrayChevron>
          <Glyph w={14} h={12}><path d="M2 2h7v6H2z" fill="#345a88" stroke="#a9bdd8" /><path d="M4 9h6v2H4z" fill="#d8d09c" /><path d="M11 1q2 2 0 5M13 0q2 3 0 7" stroke="#a9dcf8" /></Glyph>
          <Glyph w={12} h={12}><path d="M2 3l4-1 5 5-2 4-5-2z" fill="#4d9448" stroke="#1f5c2c" /><path d="M4 4l4 4" stroke="#b8e09c" /></Glyph>
          <Glyph w={13} h={12}><path d="M1 2h6v5H1zM2 8h5v3H2z" fill="#cfe4fb" stroke="#5886bc" /><path d="M9 2q2 2 0 5M11 1q2 3 0 7" stroke="#8ee48c" /></Glyph>
          <Glyph w={12} h={12}><path d="M2 1h8v7l-4 4-4-4z" fill="#e0483c" stroke="#f8b8a8" /><path d="M4 4h4M4 6h4" stroke="#f8c8b8" /></Glyph>
          <Glyph w={13} h={12}><path d="M2 3l4-2 5 5-2 4-4-1z" fill="#b4b8c0" stroke="#54606c" /><circle cx="8" cy="8" r="3" fill="#d83a34" /><path d="M6 6l4 4" stroke="#fff" /></Glyph>
          <Glyph w={12} h={12}><circle cx="6" cy="6" r="5.5" fill="#f39232" /><path d="M4 4q2-2 4 0t-2 5M4 4v4" stroke="#fff" strokeWidth="1.5" /></Glyph>
          <Clock>15:36</Clock>
        </Tray>
      </Taskbar>
      <Watermark>www.furgovw.org</Watermark>
    </Window>
  );
}
